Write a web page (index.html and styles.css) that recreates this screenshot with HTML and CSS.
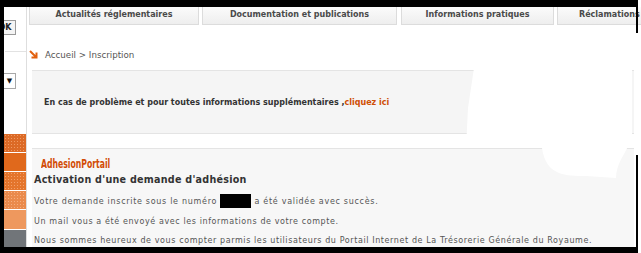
FILE: index.html
```html
<!DOCTYPE html>
<html lang="fr">
<head>
<meta charset="utf-8">
<title>Inscription</title>
<link rel="stylesheet" href="styles.css">
</head>
<body>
<div class="topbar"></div>
<div class="row">
  <div class="leftblack"></div>
  <aside class="sidebar">
    <div class="okbtn">OK</div>
    <div class="sep"></div>
    <div class="select">▼</div>
    <div class="blocks">
      <div class="blk b1"></div>
      <div class="blk b2"></div>
      <div class="blk b3"></div>
      <div class="blk b4"></div>
      <div class="blk b5"></div>
      <div class="blk b6"></div>
    </div>
  </aside>
  <main class="main">
    <nav class="tabs">
      <div class="tab t1">Actualités réglementaires</div>
      <div class="tab t2">Documentation et publications</div>
      <div class="tab t3">Informations pratiques</div>
      <div class="tab t4">Réclamations</div>
    </nav>
    <div class="crumb">
      <svg class="arrow" width="9" height="9" viewBox="0 0 9 9"><path d="M1 1 L7.5 7.5 M7.5 2.5 V7.5 H2.5" fill="none" stroke="#e2600f" stroke-width="2"/></svg>
      <span>Accueil &gt; Inscription</span>
    </div>
    <div class="infobox">
      <p>En cas de problème et pour toutes informations supplémentaires ,<a href="#">cliquez ici</a></p>
    </div>
    <section class="content">
      <div class="portal"><span>AdhesionPortail</span></div>
      <h1>Activation d'une demande d'adhésion</h1>
      <p class="first">Votre demande inscrite sous le numéro <span class="redact"></span> a été validée avec succès.</p>
      <p>Un mail vous a été envoyé avec les informations de votre compte.</p>
      <p>Nous sommes heureux de vous compter parmis les utilisateurs du Portail Internet de La Trésorerie Générale du Royaume.</p>
    </section>
  </main>
</div>
<div class="bottombar"></div>
<svg class="blob" width="170" height="150" viewBox="0 0 170 150"><path d="M8 40 C20 20 60 8 110 6 C140 6 162 14 166 30 L166 110 C158 128 150 136 150 150 L120 148 C100 148 80 148 76 120 L0 120 L2 80 Z" fill="#ffffff"/></svg>
<div class="rline rl1"></div>
<div class="rline rl2"></div>
</body>
</html>
```
FILE: styles.css
```css
html, body {
  margin: 0;
  padding: 0;
}
body {
  width: 641px;
  height: 253px;
  overflow: hidden;
  background: #ffffff;
  position: relative;
  font-family: "DejaVu Sans", Verdana, sans-serif;
}
.topbar {
  height: 7px;
  width: 638px;
  background: #000;
}
.row {
  display: flex;
  height: 240px;
}
.leftblack {
  width: 4px;
  background: #000;
  flex: none;
}
.sidebar {
  width: 22px;
  flex: none;
  border-right: 1px solid #dedede;
  overflow: hidden;
  display: flex;
  flex-direction: column;
}
.sidebar > * { flex: none; }
.okbtn {
  margin-top: 13px;
  margin-left: -10px;
  width: 20px;
  height: 13px;
  border: 1px solid #9a9a9a;
  background: #f4f4f4;
  font-size: 8px;
  font-weight: bold;
  line-height: 13px;
  text-align: center;
  color: #222;
}
.sep {
  margin-top: 16px;
  margin-left: 1px;
  height: 1px;
  background: #e2e2e2;
}
.select {
  margin-top: 21px;
  width: 11px;
  height: 14px;
  border: 1px solid #a8a8a8;
  border-left: none;
  font-size: 7px;
  line-height: 14px;
  text-align: center;
  color: #111;
}
.blocks {
  margin-top: 45px;
  display: flex;
  flex-direction: column;
  gap: 1px;
}
.blk {
  height: 18px;
  flex: none;
}
.b1 { background: #dc6a26 radial-gradient(circle, #ef9a63 0.6px, transparent 0.9px) 0 0 / 3px 3px; }
.b2 { background: #e0691c; }
.b3 { background: #e4752c radial-gradient(circle, #f3a06a 0.6px, transparent 0.9px) 0 0 / 3px 3px; }
.b4 { background: #ea8a4c radial-gradient(circle, #f5ae80 0.6px, transparent 0.9px) 0 0 / 3px 3px; }
.b5 { background: #ee985e; height: 19px; }
.b6 { background: #717579; height: 22px; }

.main {
  flex: 1;
  display: flex;
  flex-direction: column;
  padding-left: 2px;
  min-width: 0;
}
.main > * { flex: none; }
.tabs {
  display: flex;
  gap: 3px;
  height: 18px;
}
.tab {
  flex: none;
  box-sizing: border-box;
  height: 18px;
  border: 1px solid #dcdcdc;
  border-top: none;
  background: linear-gradient(#fbfbfb, #eeeeee);
  font-size: 8px;
  font-weight: bold;
  color: #4a4a4a;
  text-align: center;
  line-height: 15px;
  white-space: nowrap;
}
.t1 { width: 170px; }
.t2 { width: 195px; }
.t3 { width: 153px; margin-left: 1px; }
.t4 { width: 100px; text-align: left; padding-left: 21px; }

.crumb {
  margin-top: 25px;
  display: flex;
  align-items: center;
  gap: 7px;
  height: 10px;
  font-size: 8.7px;
  color: #555;
}
.arrow { display: block; margin-top: -2px; }

.infobox {
  margin-top: 10px;
  margin-left: 3px;
  width: 602px;
  height: 64px;
  box-sizing: border-box;
  border-top: 1px solid #e4e4e4;
  border-bottom: 1px solid #e4e4e4;
  background: #f5f5f5;
  padding: 26px 0 0 12px;
}
.infobox p {
  margin: 0;
  font-size: 8px;
  font-weight: bold;
  color: #333;
  line-height: 12px;
}
.infobox a {
  color: #cf4e05;
  text-decoration: none;
}
.content {
  margin-top: 14px;
  margin-left: 3px;
  width: 602px;
  flex: 1 1 auto;
  min-height: 0;
  overflow: hidden;
  box-sizing: border-box;
  border-top: 1px solid #e4e4e4;
  background: #f7f7f7;
  padding: 8px 0 0 2px;
  color: #555;
}
.portal {
  margin-left: 7px;
  height: 14px;
  font-family: "DejaVu Sans Condensed", "DejaVu Sans", sans-serif;
  font-weight: bold;
  font-size: 13px;
  line-height: 14px;
  color: #d24c05;
  white-space: nowrap;
}
.portal span {
  display: inline-block;
  transform: scaleX(0.66);
  transform-origin: left center;
}
h1 {
  margin: 2px 0 7px;
  font-size: 9.6px;
  font-weight: bold;
  line-height: 14px;
  color: #333;
  letter-spacing: 0.25px;
}
.content p {
  margin: 0 0 7.5px;
  font-size: 8px;
  line-height: 12px;
  letter-spacing: 0.6px;
  white-space: nowrap;
}
.content p.first {
  letter-spacing: 0.7px;
}
.redact {
  display: inline-block;
  width: 31px;
  height: 14px;
  background: #000;
  vertical-align: -4px;
}
.bottombar {
  position: absolute;
  left: 0;
  top: 247px;
  width: 638px;
  height: 6px;
  background: #000;
}
.blob {
  position: absolute;
  left: 466px;
  top: 28px;
}
.rline {
  position: absolute;
  left: 636px;
  width: 2px;
  background: #000;
}
.rl1 { top: 0; height: 33px; }
.rl2 { top: 155px; height: 98px; }
```
